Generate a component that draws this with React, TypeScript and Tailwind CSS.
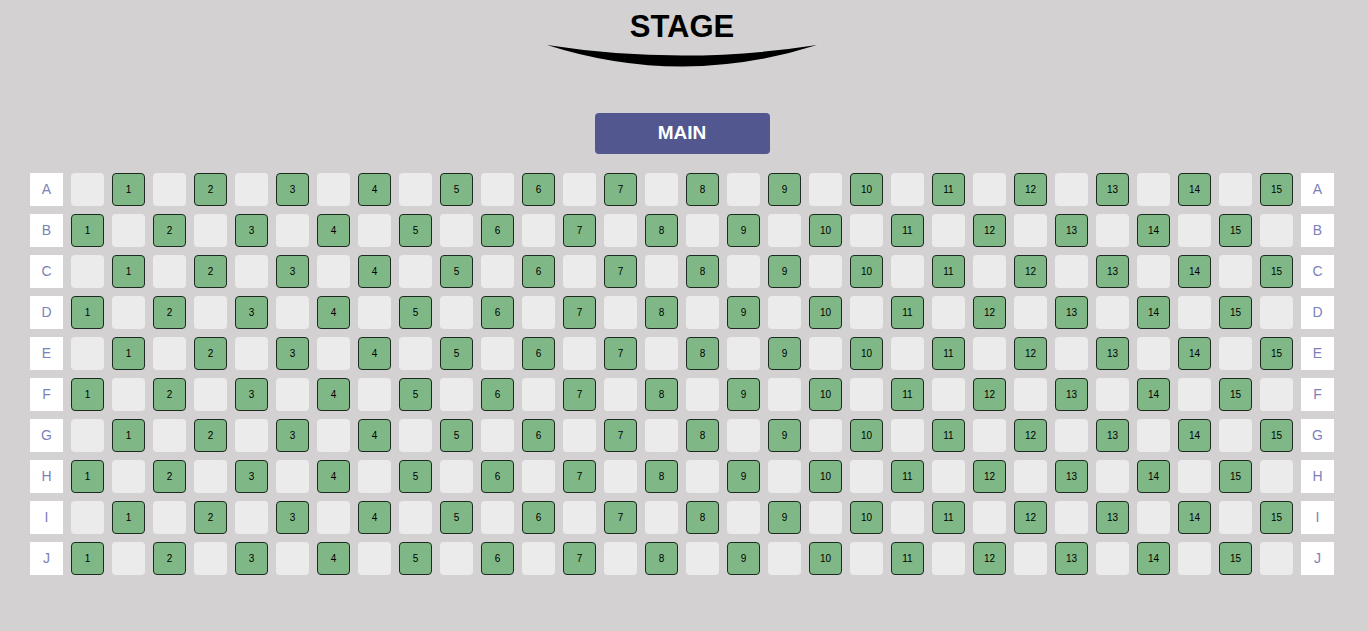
const ROWS = ['A', 'B', 'C', 'D', 'E', 'F', 'G', 'H', 'I', 'J'];

function RowLabel({ label }: { label: string }) {
  return (
    <div className="w-[33px] h-[33px] bg-white flex items-center justify-center text-[14px] font-medium text-[#7c81b8]">
      {label}
    </div>
  );
}

function Seat({ n }: { n?: number }) {
  if (n === undefined) {
    return <div className="w-[33px] h-[33px] rounded-[4px] bg-[#ebebeb]" />;
  }
  return (
    <div className="w-[33px] h-[33px] rounded-[4px] bg-[#7fb886] border border-[#1d2a1f] flex items-center justify-center text-[10px] text-black">
      {n}
    </div>
  );
}

export default function App() {
  return (
    <div className="min-h-[631px] w-full bg-[#d3d1d2] pr-[4px] font-['Liberation_Sans',Arial,sans-serif]">
      <div className="flex flex-col items-center">
        <div className="mt-[10px] text-[31px] leading-[34px] font-bold text-black">STAGE</div>
        <svg width="270" height="26" viewBox="0 0 270 26">
          <path d="M0 1 Q135 22 270 1 Q135 44 0 1 Z" fill="#000" />
        </svg>
        <div className="mt-[43px] w-[175px] h-[41px] rounded-[4px] bg-[#52588f] flex items-center justify-center text-white font-bold text-[19px]">
          MAIN
        </div>
        <div className="mt-[19px] flex flex-col gap-[8px]">
          {ROWS.map((r, ri) => (
            <div key={r} className="flex gap-[8px]">
              <RowLabel label={r} />
              {Array.from({ length: 30 }).map((_, i) => {
                const filled = ri % 2 === 0 ? i % 2 === 1 : i % 2 === 0;
                return <Seat key={i} n={filled ? Math.floor(i / 2) + 1 : undefined} />;
              })}
              <RowLabel label={r} />
            </div>
          ))}
        </div>
      </div>
    </div>
  );
}
